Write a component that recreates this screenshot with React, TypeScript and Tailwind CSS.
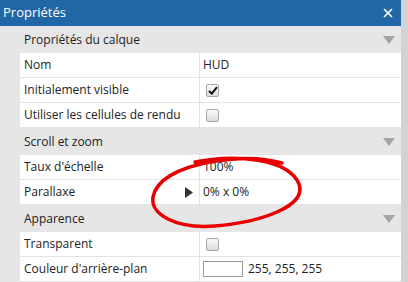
import React from 'react';

const font = { fontFamily: '"Open Sans", "Noto Sans", sans-serif' };

function SectionHeader({ title }: { title: string }) {
  return (
    <div className="h-[27px] flex items-center justify-between bg-[#e6e6e6] pl-[24px] pr-[6px] text-[12px] text-[#222]">
      <span>{title}</span>
      <svg width="12" height="8" viewBox="0 0 12 8">
        <path d="M0 0 L12 0 L6 8 Z" fill="#a3a3a3" />
      </svg>
    </div>
  );
}

function Row({ label, children, arrow }: { label: string; children?: React.ReactNode; arrow?: boolean }) {
  return (
    <div className="h-[25px] flex bg-[#e6e6e6]">
      <div className="w-[20px]" />
      <div className="flex-1 flex bg-white border-b border-[#e3e3e3]">
        <div className="w-[180px] flex items-center justify-between pl-[4px] pr-[6px] border-r border-[#e3e3e3] text-[12px] text-[#222]">
          <span>{label}</span>
          {arrow && (
            <svg width="8" height="11" viewBox="0 0 8 11">
              <path d="M0 0 L8 5.5 L0 11 Z" fill="#333" />
            </svg>
          )}
        </div>
        <div className="flex-1 flex items-center pl-[3px] text-[12px] text-[#222]">{children}</div>
      </div>
    </div>
  );
}

function Checkbox({ checked }: { checked?: boolean }) {
  return (
    <div className="ml-[3px] w-[13px] h-[13px] rounded-[2px] border border-[#a6a6a6] bg-gradient-to-b from-[#fafafa] to-[#dcdcdc] flex items-center justify-center">
      {checked && (
        <svg width="10" height="9" viewBox="0 0 10 9">
          <path d="M1 5 L3.8 7.6 L9 1.2" stroke="#111" strokeWidth="2" fill="none" />
        </svg>
      )}
    </div>
  );
}

export default function App() {
  return (
    <div className="relative w-[408px] h-[282px] flex overflow-hidden bg-[#d2d2d2]" style={font}>
      <div className="w-[401px] flex flex-col">
        <div className="h-[26px] flex items-center justify-between bg-[#2166a5] pl-[3px] pr-[8px] text-white text-[13px]">
          <span>Propriétés</span>
          <svg width="10" height="10" viewBox="0 0 10 10">
            <path d="M1 1 L9 9 M9 1 L1 9" stroke="#fff" strokeWidth="1.6" />
          </svg>
        </div>
        <SectionHeader title="Propriétés du calque" />
        <Row label="Nom">HUD</Row>
        <Row label="Initialement visible">
          <Checkbox checked />
        </Row>
        <Row label="Utiliser les cellules de rendu">
          <Checkbox />
        </Row>
        <SectionHeader title="Scroll et zoom" />
        <Row label="Taux d'échelle">100%</Row>
        <Row label="Parallaxe" arrow>
          0% x 0%
        </Row>
        <SectionHeader title="Apparence" />
        <Row label="Transparent">
          <Checkbox />
        </Row>
        <Row label="Couleur d'arrière-plan">
          <div className="w-[40px] h-[16px] border border-[#9a9a9a] bg-white" />
          <span className="ml-[5px]">255, 255, 255</span>
        </Row>
      </div>
      <div className="flex-1" />
      <svg className="absolute left-0 top-0 pointer-events-none" width="408" height="282" viewBox="0 0 408 282">
        <path
          d="M195 162 C235 154, 288 158, 299 184 C307 206, 262 222, 215 226 C175 229, 150 214, 153 197 C156 180, 178 168, 210 162 C238 157, 262 157, 282 163"
          stroke="#e80000"
          strokeWidth="3.5"
          fill="none"
          strokeLinecap="round"
        />
      </svg>
    </div>
  );
}
